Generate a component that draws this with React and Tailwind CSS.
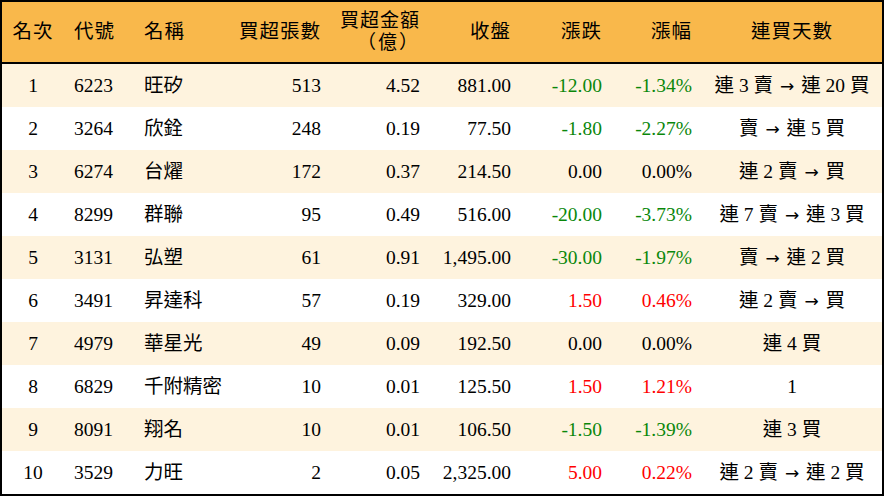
import React from "react";

const rows = [
  ["1", "6223", "旺矽", "513", "4.52", "881.00", "-12.00", "-1.34%", "連 3 賣 → 連 20 買"],
  ["2", "3264", "欣銓", "248", "0.19", "77.50", "-1.80", "-2.27%", "賣 → 連 5 買"],
  ["3", "6274", "台燿", "172", "0.37", "214.50", "0.00", "0.00%", "連 2 賣 → 買"],
  ["4", "8299", "群聯", "95", "0.49", "516.00", "-20.00", "-3.73%", "連 7 賣 → 連 3 買"],
  ["5", "3131", "弘塑", "61", "0.91", "1,495.00", "-30.00", "-1.97%", "賣 → 連 2 買"],
  ["6", "3491", "昇達科", "57", "0.19", "329.00", "1.50", "0.46%", "連 2 賣 → 買"],
  ["7", "4979", "華星光", "49", "0.09", "192.50", "0.00", "0.00%", "連 4 買"],
  ["8", "6829", "千附精密", "10", "0.01", "125.50", "1.50", "1.21%", "1"],
  ["9", "8091", "翔名", "10", "0.01", "106.50", "-1.50", "-1.39%", "連 3 買"],
  ["10", "3529", "力旺", "2", "0.05", "2,325.00", "5.00", "0.22%", "連 2 賣 → 連 2 買"],
];

const cols = "grid grid-cols-[62px_70px_97px_100px_99px_91px_91px_90px_180px]";

function colorFor(v) {
  if (v.startsWith("-")) return "text-[#0a870a]";
  if (/^0\.00/.test(v)) return "text-black";
  return "text-[#ff0000]";
}

function Streak({ text }) {
  const parts = text.split("→");
  if (parts.length === 1) return <>{text}</>;
  return (
    <>
      {parts[0]}
      <span className="font-['DejaVu_Sans'] text-[17px] mx-[2px]">→</span>
      {parts[1]}
    </>
  );
}

export default function App() {
  return (
    <div
      className="w-[884px] h-[496px] bg-white border-2 border-black text-black text-[19.5px] leading-[22px]"
      style={{ fontFamily: '"Liberation Serif", "Noto Sans CJK TC", serif' }}
    >
      <div className={`${cols} h-[62px] bg-[#f9b84b] border-b-2 border-black items-center`}>
        <div className="text-center tracking-[1px]">名次</div>
        <div className="pl-[10px] tracking-[1px]">代號</div>
        <div className="pl-[10px] tracking-[1px]">名稱</div>
        <div className="text-right pr-[10px] tracking-[1px]">買超張數</div>
        <div className="text-right pr-[10px] text-[19px] leading-[20px] -mt-[2px] tracking-[1px]">
          <div>買超金額</div>
          <div className="font-['Noto_Sans_CJK_TC'] tracking-[2px]">（億）</div>
        </div>
        <div className="text-right pr-[10px] tracking-[1px]">收盤</div>
        <div className="text-right pr-[10px] tracking-[1px]">漲跌</div>
        <div className="text-right pr-[10px] tracking-[1px]">漲幅</div>
        <div className="text-center tracking-[1px]">連買天數</div>
      </div>
      {rows.map((r, i) => (
        <div
          key={i}
          className={`${cols} h-[43px] items-center ${i % 2 === 0 ? "bg-[#fef3de]" : "bg-white"}`}
        >
          <div className="text-center">{r[0]}</div>
          <div className="pl-[10px]">{r[1]}</div>
          <div className="pl-[10px]">{r[2]}</div>
          <div className="text-right pr-[10px]">{r[3]}</div>
          <div className="text-right pr-[10px]">{r[4]}</div>
          <div className="text-right pr-[10px]">{r[5]}</div>
          <div className={`text-right pr-[10px] ${colorFor(r[6])}`}>{r[6]}</div>
          <div className={`text-right pr-[10px] ${colorFor(r[7])}`}>{r[7]}</div>
          <div className="text-center whitespace-nowrap">
            <Streak text={r[8]} />
          </div>
        </div>
      ))}
    </div>
  );
}
